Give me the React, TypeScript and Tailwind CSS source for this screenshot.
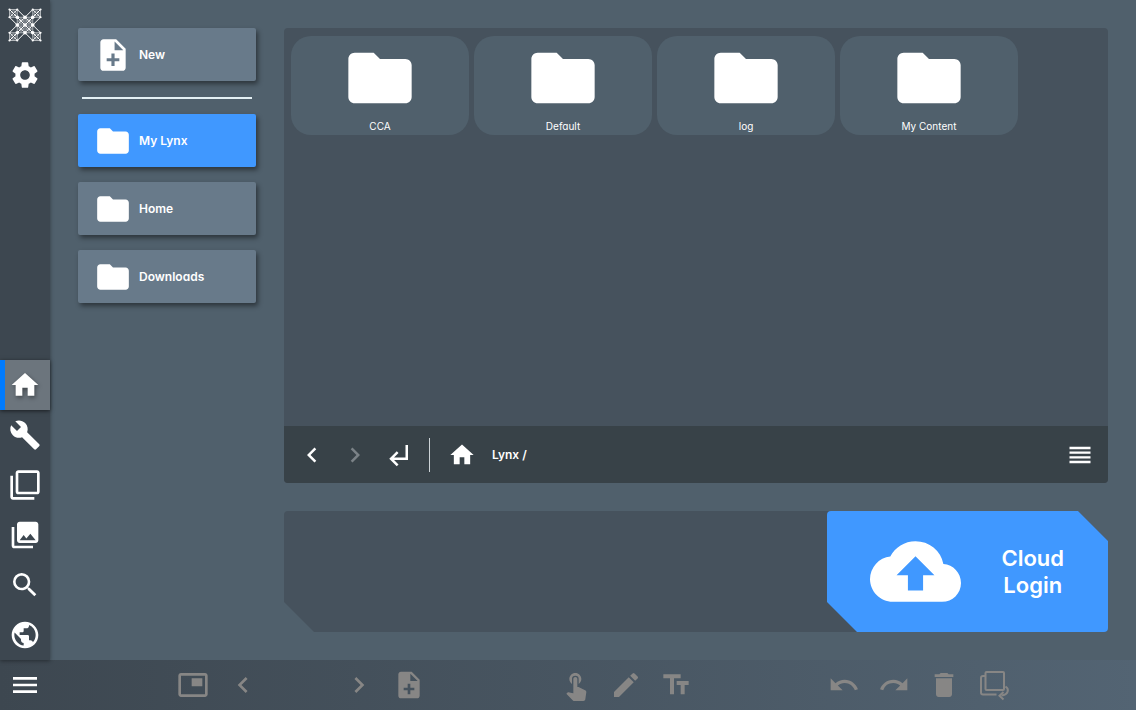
import React, { useState } from 'react';
import type { IconType } from 'react-icons';
import {
  MdBuild,
  MdChevronLeft,
  MdChevronRight,
  MdCloudUpload,
  MdCollections,
  MdCreate,
  MdDelete,
  MdFilterNone,
  MdFolder,
  MdHome,
  MdMenu,
  MdNoteAdd,
  MdPictureInPicture,
  MdPublic,
  MdRedo,
  MdReorder,
  MdSearch,
  MdSettings,
  MdSubdirectoryArrowLeft,
  MdTextFields,
  MdTouchApp,
  MdUndo,
} from 'react-icons/md';

const tabs: { label: string; icon: IconType }[] = [
  { label: 'Home', icon: MdHome },
  { label: 'Tools', icon: MdBuild },
  { label: 'Pages', icon: MdFilterNone },
  { label: 'Media', icon: MdCollections },
  { label: 'Search', icon: MdSearch },
  { label: 'Web', icon: MdPublic },
];

const places = ['My Lynx', 'Home', 'Downloads'];
const folders = ['CCA', 'Default', 'log', 'My Content'];

const Logo: React.FC = () => {
  const nodes: [number, number][] = [];
  for (let y = 0; y < 5; y++) {
    for (let x = 0; x < 5; x++) {
      // The middle of each outer side stays open
      if ((x === 2 && y % 4 === 0) || (y === 2 && x % 4 === 0)) continue;
      nodes.push([x, y]);
    }
  }
  const has = (x: number, y: number) => nodes.some(([a, b]) => a === x && b === y);
  const steps = [[1, 0], [0, 1], [1, 1], [-1, 1]];

  return (
    <svg width="34" height="34" viewBox="0 0 34 34" stroke="currentColor" fill="currentColor" aria-hidden="true">
      {nodes.flatMap(([x, y]) =>
        steps
          .filter(([dx, dy]) => has(x + dx, y + dy))
          .map(([dx, dy]) => (
            <line
              key={`${x}-${y}-${dx}-${dy}`}
              x1={1.5 + x * 7.75}
              y1={1.5 + y * 7.75}
              x2={1.5 + (x + dx) * 7.75}
              y2={1.5 + (y + dy) * 7.75}
              strokeWidth={dx !== 0 && dy !== 0 ? 1 : 0.6}
            />
          ))
      )}
      {[5.4, 28.6].flatMap((cx) =>
        [5.4, 28.6].map((cy) => (
          <circle key={`${cx}-${cy}`} cx={cx} cy={cy} r="2.6" fill="none" strokeWidth="0.6" />
        ))
      )}
      {[13.1, 20.9].flatMap((cx) =>
        [13.1, 20.9].map((cy) => (
          <circle key={`${cx}-${cy}`} cx={cx} cy={cy} r="2.2" fill="none" strokeWidth="0.7" />
        ))
      )}
      {nodes.map(([x, y]) => {
        const inner = x > 0 && x < 4 && y > 0 && y < 4;
        return <circle key={`${x}-${y}`} cx={1.5 + x * 7.75} cy={1.5 + y * 7.75} r={inner ? 1.8 : 1.1} stroke="none" />;
      })}
    </svg>
  );
};

const RotatePagesIcon: React.FC = () => (
  <svg width="32" height="32" viewBox="0 0 32 32" fill="none" stroke="currentColor" strokeWidth="2" aria-hidden="true">
    <rect x="7.5" y="3" width="18.5" height="18" rx="1" />
    <path d="M7.5 7H5Q3 7 3 9V23.5Q3 25.5 5 25.5H18.5" />
    <path d="M27.5 17.5C31.5 20 30.5 25.5 23.5 26.5" />
    <path d="M25.5 23L21.5 26.8L25.5 30.5" />
  </svg>
);

interface ToolButtonProps {
  label: string;
  children: React.ReactNode;
}

const ToolButton: React.FC<ToolButtonProps> = ({ label, children }) => (
  <button type="button" aria-label={label} className="flex size-[50px] items-center justify-center">
    {children}
  </button>
);

interface PlaceButtonProps {
  label: string;
  icon: IconType;
  active?: boolean;
  onClick?: () => void;
}

const PlaceButton: React.FC<PlaceButtonProps> = ({ label, icon: Icon, active, onClick }) => (
  <button
    type="button"
    onClick={onClick}
    className={`flex h-[53px] items-center gap-[7px] rounded-xs pl-4 text-left text-xs font-semibold shadow-[2px_3px_5px_rgba(0,0,0,0.45)] ${
      active ? 'bg-[#4098ff]' : 'bg-[#687a8a]'
    }`}
  >
    <Icon size={38} />
    {label}
  </button>
);

export default function App() {
  const [tab, setTab] = useState('Home');
  const [place, setPlace] = useState('My Lynx');

  return (
    <div className="flex h-screen flex-col bg-[#50606c] font-['Inter','Liberation_Sans',sans-serif] text-white [font-feature-settings:'cv11']">
      <div className="flex min-h-0 flex-1">
        <aside className="z-10 flex w-[50px] shrink-0 flex-col bg-[#3d4750] shadow-[0_1px_4px_rgba(0,0,0,0.4)]">
          <ToolButton label="Lynx">
            <Logo />
          </ToolButton>
          <ToolButton label="Settings">
            <MdSettings size={32} />
          </ToolButton>
          <nav className="mt-auto flex flex-col">
            {tabs.map(({ label, icon: Icon }) => (
              <button
                key={label}
                type="button"
                aria-label={label}
                onClick={() => setTab(label)}
                className={`relative flex size-[50px] items-center justify-center ${
                  tab === label ? 'bg-[#6c757d] shadow-[0_1px_4px_rgba(0,0,0,0.6)]' : ''
                }`}
              >
                {tab === label && <span className="absolute inset-y-0 left-0 w-[5px] bg-[#007bff]" />}
                <Icon size={32} className={tab === label ? 'drop-shadow-[1px_2px_2px_rgba(0,0,0,0.4)]' : ''} />
              </button>
            ))}
          </nav>
        </aside>

        <main className="flex min-w-0 flex-1 gap-7 p-7">
          <div className="flex w-[178px] shrink-0 flex-col gap-[15px]">
            <PlaceButton label="New" icon={MdNoteAdd} />
            <hr className="mx-1 mt-px border-t-2 border-[#e4f0f4]" />
            {places.map((name) => (
              <PlaceButton
                key={name}
                label={name}
                icon={MdFolder}
                active={place === name}
                onClick={() => setPlace(name)}
              />
            ))}
          </div>

          <div className="flex min-w-0 flex-1 flex-col gap-7">
            <section className="flex min-h-0 flex-1 flex-col overflow-hidden rounded-sm bg-[#46525d]">
              <div className="flex flex-1 flex-wrap content-start gap-[5px] overflow-auto px-[7px] py-2">
                {folders.map((name) => (
                  <button
                    key={name}
                    type="button"
                    className="flex h-[99px] w-[178px] flex-col items-center justify-between rounded-[20px] bg-[#50606c] pt-1 pb-0.5 text-[10px] leading-[14px]"
                  >
                    <MdFolder size={76} />
                    {name}
                  </button>
                ))}
              </div>
              <div className="flex h-[57px] items-center bg-[#384248] px-1.5">
                <button type="button" aria-label="Back" className="flex w-[43px] justify-center">
                  <MdChevronLeft size={30} />
                </button>
                <button type="button" aria-label="Forward" disabled className="flex w-[43px] justify-center text-[#7b8287]">
                  <MdChevronRight size={30} />
                </button>
                <button type="button" aria-label="Up one level" className="flex w-[43px] justify-center">
                  <MdSubdirectoryArrowLeft size={30} />
                </button>
                <span className="ml-2.5 h-[34px] w-px bg-[#ccd3d6]" />
                <button type="button" aria-label="Root folder" className="ml-[18px]">
                  <MdHome size={28} />
                </button>
                <span className="ml-4 text-xs font-semibold">Lynx /</span>
                <button type="button" aria-label="List view" className="mr-2 ml-auto">
                  <MdReorder size={28} />
                </button>
              </div>
            </section>

            <section className="flex h-[121px] shrink-0 justify-end rounded-sm bg-[#46525d] [clip-path:polygon(0_0,calc(100%-30px)_0,100%_30px,100%_100%,30px_100%,0_calc(100%-30px))]">
              <button
                type="button"
                className="flex w-[281px] items-center justify-between rounded-sm bg-[#4098ff] pr-[44px] pl-[43px] text-[22px] leading-[27px] font-semibold [clip-path:polygon(0_0,100%_0,100%_100%,30px_100%,0_calc(100%-30px))]"
              >
                <MdCloudUpload size={91} />
                <span className="text-center">
                  Cloud
                  <br />
                  Login
                </span>
              </button>
            </section>
          </div>
        </main>
      </div>

      <footer className="flex h-[50px] shrink-0 items-center bg-linear-to-r from-[#3d4750] to-[#536473]">
        <ToolButton label="Menu">
          <MdMenu size={32} />
        </ToolButton>
        <div className="flex flex-1 justify-evenly text-[#878685]">
          <div className="flex">
            <ToolButton label="Page overview">
              <MdPictureInPicture size={32} />
            </ToolButton>
            <ToolButton label="Previous page">
              <MdChevronLeft size={32} />
            </ToolButton>
            <div className="w-[66px]" />
            <ToolButton label="Next page">
              <MdChevronRight size={32} />
            </ToolButton>
            <ToolButton label="Add page">
              <MdNoteAdd size={32} />
            </ToolButton>
          </div>
          <div className="flex">
            <ToolButton label="Select">
              <MdTouchApp size={32} />
            </ToolButton>
            <ToolButton label="Draw">
              <MdCreate size={32} />
            </ToolButton>
            <ToolButton label="Text">
              <MdTextFields size={32} />
            </ToolButton>
          </div>
          <div className="flex">
            <ToolButton label="Undo">
              <MdUndo size={32} />
            </ToolButton>
            <ToolButton label="Redo">
              <MdRedo size={32} />
            </ToolButton>
            <ToolButton label="Delete">
              <MdDelete size={32} />
            </ToolButton>
            <ToolButton label="Rotate pages">
              <RotatePagesIcon />
            </ToolButton>
          </div>
        </div>
      </footer>
    </div>
  );
}
